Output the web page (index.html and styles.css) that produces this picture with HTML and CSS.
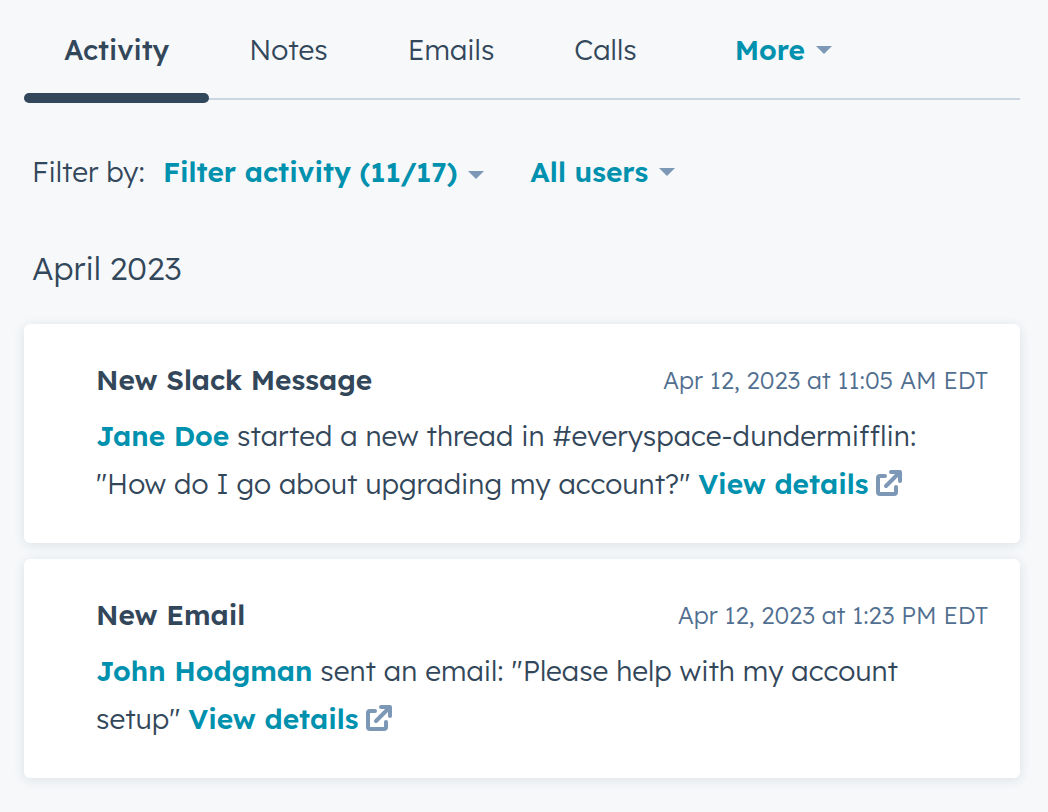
FILE: index.html
```html
<!DOCTYPE html>
<html lang="en">
<head>
    <meta charset="UTF-8">
    <meta name="viewport" content="width=device-width, initial-scale=1.0">
    <title>Activity</title>
    <link rel="stylesheet" href="styles.css">
</head>
<body>
    <nav class="tabs">
        <a class="tab active" href="#activity">Activity</a>
        <a class="tab" href="#notes">Notes</a>
        <a class="tab" href="#emails">Emails</a>
        <a class="tab" href="#calls">Calls</a>
        <button class="dropdown more" type="button">More <span class="caret"></span></button>
    </nav>

    <div class="filters">
        <span class="filter-label">Filter by:</span>
        <button class="dropdown" type="button">Filter activity (11/17) <span class="caret low"></span></button>
        <button class="dropdown" type="button">All users <span class="caret"></span></button>
    </div>

    <h2 class="month">April 2023</h2>

    <main class="timeline">
        <article class="card">
            <header class="card-header">
                <h3 class="card-title">New Slack Message</h3>
                <time class="card-time" datetime="2023-04-12T11:05-04:00">Apr 12, 2023 at 11:05 AM EDT</time>
            </header>
            <p class="card-text">
                <a href="#jane">Jane Doe</a> started a new thread in #everyspace-dundermifflin:
                "How do I go about upgrading my account?"
                <a href="#details">View details<svg class="external" viewBox="0 0 26 26" aria-hidden="true"><path d="M9 6H4a2 2 0 0 0-2 2v14a2 2 0 0 0 2 2h14a2 2 0 0 0 2-2v-5M10 16L23 3M15 2h9v9"/></svg></a>
            </p>
        </article>

        <article class="card">
            <header class="card-header">
                <h3 class="card-title">New Email</h3>
                <time class="card-time" datetime="2023-04-12T13:23-04:00">Apr 12, 2023 at 1:23 PM EDT</time>
            </header>
            <p class="card-text">
                <a href="#john">John Hodgman</a> sent an email: "Please help with my account setup"
                <a href="#details">View details<svg class="external" viewBox="0 0 26 26" aria-hidden="true"><path d="M9 6H4a2 2 0 0 0-2 2v14a2 2 0 0 0 2 2h14a2 2 0 0 0 2-2v-5M10 16L23 3M15 2h9v9"/></svg></a>
            </p>
        </article>
    </main>
</body>
</html>
```
FILE: styles.css
```css
* {
    box-sizing: border-box;
}

body {
    margin: 0;
    padding: 0 28px 34px 24px;
    background-color: #f6f8fa;
    color: #33475b;
    font-family: "Lexend Deca", Inter, "Open Sans", sans-serif;
    font-size: 28px;
    font-weight: 300;
    line-height: 48px;
}

a {
    color: #0091ae;
    font-weight: 600;
    text-decoration: none;
}

h2, h3, p {
    margin: 0;
}

.tabs {
    display: flex;
    height: 100px;
    padding-top: 26px;
    border-bottom: 2px solid #cbd6e2;
}

.tab {
    padding: 0 40px;
    color: #33475b;
    font-weight: 300;
}

.tab.active {
    position: relative;
    font-weight: 500;
}

.tab.active::after {
    content: "";
    position: absolute;
    left: 0;
    right: 0;
    bottom: -5px;
    height: 10px;
    border-radius: 5px;
    background-color: #33475b;
}

.dropdown {
    display: flex;
    align-items: center;
    gap: 11px;
    height: 48px;
    padding: 0;
    border: 0;
    background: none;
    color: #0091ae;
    font: inherit;
    font-weight: 600;
}

.dropdown.more {
    margin-left: 58px;
}

.caret {
    border: 8px solid transparent;
    border-top-color: #7c98b6;
    border-bottom: 0;
}

.caret.low {
    margin-top: 6px;
}

.filters {
    display: flex;
    gap: 46px;
    padding: 48px 8px 0;
}

.filter-label {
    margin-right: -28px;
}

.month {
    padding: 48px 8px 32px;
    font-size: 32px;
    font-weight: 300;
}

.timeline {
    display: grid;
    gap: 16px;
}

.card {
    padding: 32px 32px 35px 72px;
    border-radius: 6px;
    background-color: #fff;
    box-shadow: 0 2px 12px rgba(45, 62, 80, 0.12);
}

.card-header {
    display: flex;
    justify-content: space-between;
    margin-bottom: 8px;
}

.card-title {
    font-size: 28px;
    font-weight: 600;
}

.card-time {
    color: #516f90;
    font-size: 24px;
}

.external {
    width: 26px;
    height: 26px;
    margin-left: 8px;
    vertical-align: -2px;
    fill: none;
    stroke: #7c98b6;
    stroke-width: 4;
    stroke-linecap: round;
    stroke-linejoin: round;
}
```
